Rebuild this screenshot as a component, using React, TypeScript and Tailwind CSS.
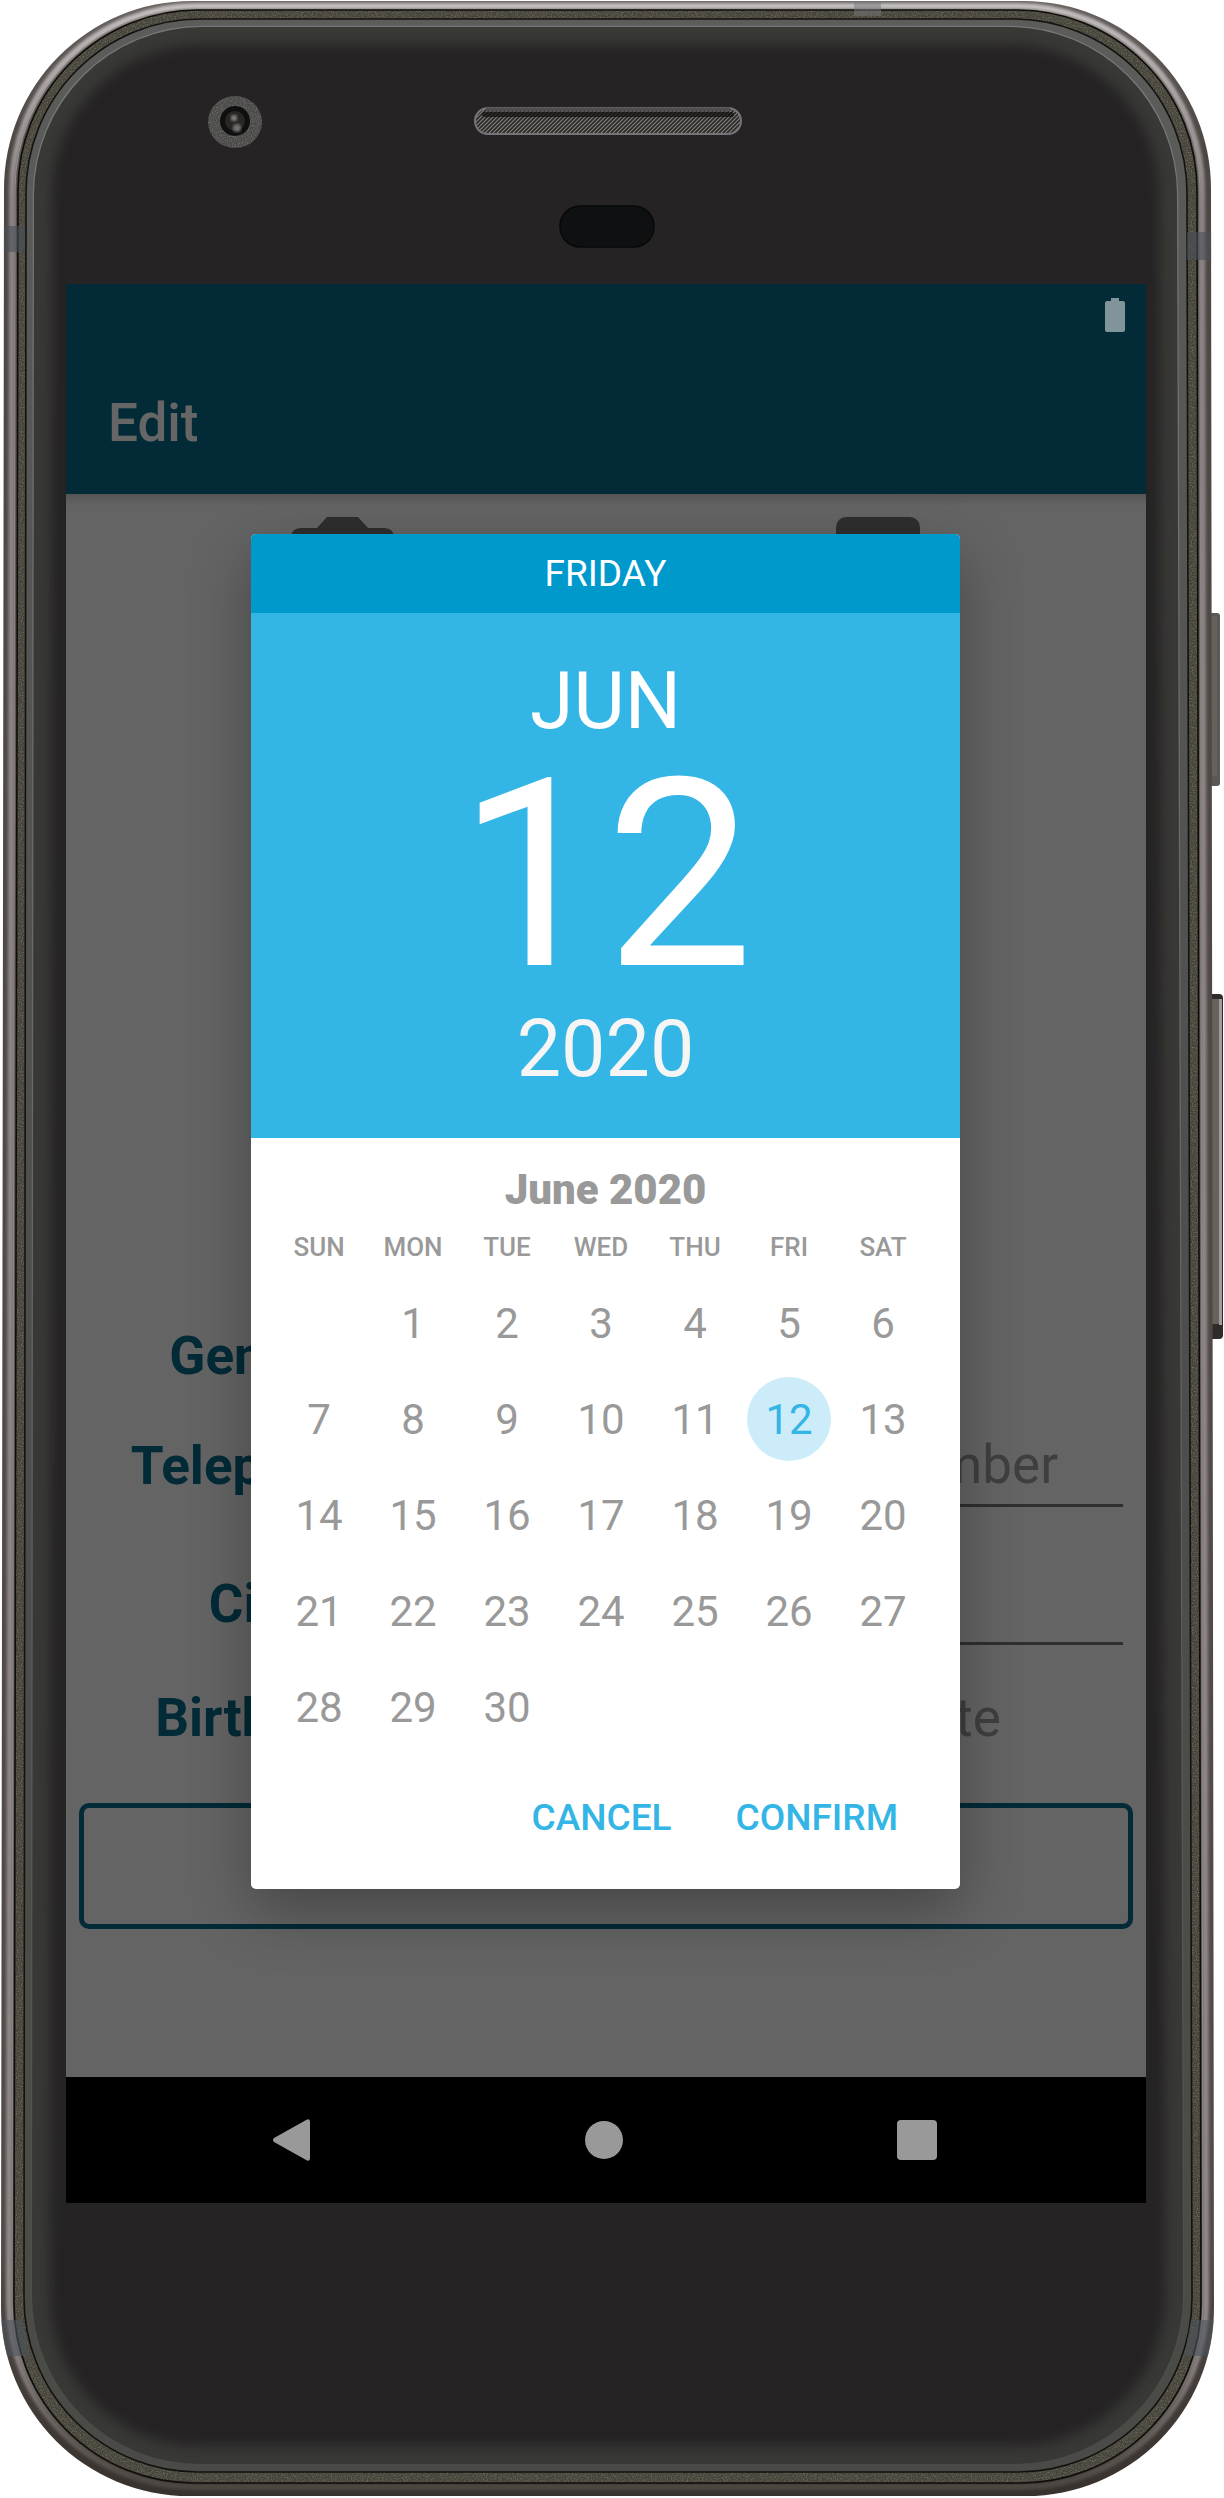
import React from "react";

const weekdays = ["SUN", "MON", "TUE", "WED", "THU", "FRI", "SAT"];
const weeks: (number | null)[][] = [
  [null, 1, 2, 3, 4, 5, 6],
  [7, 8, 9, 10, 11, 12, 13],
  [14, 15, 16, 17, 18, 19, 20],
  [21, 22, 23, 24, 25, 26, 27],
  [28, 29, 30, null, null, null, null],
];

// Rounded body outline whose sides widen slightly towards the bottom.
function body(lt: number, t: number, rt: number, lb: number, b: number, rb: number, r: number) {
  return `M${lt + r} ${t}H${rt - r}A${r} ${r} 0 0 1 ${rt} ${t + r}L${rb} ${b - r}A${r} ${r} 0 0 1 ${rb - r} ${b}H${lb + r}A${r} ${r} 0 0 1 ${lb} ${b - r}L${lt} ${t + r}A${r} ${r} 0 0 1 ${lt + r} ${t}Z`;
}

const outer = body(4, 1, 1211, 1, 2496, 1214, 188);
const band = body(18, 10, 1197, 14, 2483, 1201, 180);
const glassEdge = body(26, 19, 1187, 24, 2472, 1192, 174);
const glass = body(34, 27, 1177, 32, 2464, 1183, 168);

function PhoneHardware() {
  return (
    <svg aria-hidden="true" className="absolute inset-0 h-full w-full" viewBox="0 0 1224 2498" preserveAspectRatio="none">
      <defs>
        <linearGradient id="metal" x1="0" x2="0" y1="0" y2="1">
          <stop offset="0" stopColor="#66605d" />
          <stop offset="0.06" stopColor="#4d4743" />
          <stop offset="0.9" stopColor="#524a47" />
          <stop offset="1" stopColor="#38322e" />
        </linearGradient>
        <linearGradient id="shine" x1="0" x2="0" y1="0" y2="1">
          <stop offset="0" stopColor="#c4bfbf" />
          <stop offset="0.08" stopColor="#8b8585" />
          <stop offset="0.94" stopColor="#918a8a" />
          <stop offset="1" stopColor="#4c4742" />
        </linearGradient>
        <linearGradient id="edge" x1="0" x2="0" y1="0" y2="1">
          <stop offset="0" stopColor="#5c5c5b" />
          <stop offset="0.5" stopColor="#4e4e4d" />
          <stop offset="1" stopColor="#4a4a46" />
        </linearGradient>
        <linearGradient id="rim" x1="0" x2="0" y1="0" y2="1">
          <stop offset="0" stopColor="#77777a" />
          <stop offset="0.5" stopColor="#66666a" />
          <stop offset="1" stopColor="#4a4a46" />
        </linearGradient>
        <pattern id="mesh" width="4" height="4" patternUnits="userSpaceOnUse">
          <rect width="4" height="4" fill="#2b2927" />
          <path d="M-1 3L3 -1M1 5L5 1" stroke="#817f7b" strokeWidth="1.2" />
        </pattern>
        <filter id="grain" x="0" y="0" width="1" height="1" colorInterpolationFilters="sRGB">
          <feTurbulence type="fractalNoise" baseFrequency="0.8" numOctaves="2" />
          <feColorMatrix values="0 0 0 0 0.55  0 0 0 0 0.54  0 0 0 0 0.48  1.4 0 0 0 -0.58" />
          <feComposite in2="SourceGraphic" operator="in" result="n" />
          <feMerge>
            <feMergeNode in="SourceGraphic" />
            <feMergeNode in="n" />
          </feMerge>
        </filter>
        <filter id="soft" x="-0.1" y="-0.1" width="1.2" height="1.2" colorInterpolationFilters="sRGB">
          <feGaussianBlur stdDeviation="6" />
        </filter>
        <filter id="thin" x="-0.1" y="-0.1" width="1.2" height="1.2" colorInterpolationFilters="sRGB">
          <feGaussianBlur stdDeviation="1.6" />
        </filter>
        <clipPath id="glassClip"><path d={glass} /></clipPath>
        <clipPath id="outerClip"><path d={outer} /></clipPath>
      </defs>

      <g>
        <rect x="1208" y="613" width="12" height="173" rx="3" fill="#5b5753" />
        <rect x="1208" y="616" width="9" height="160" fill="#66615d" />
        <rect x="1208" y="994" width="15" height="345" rx="4" fill="#2f2b2a" />
        <rect x="1208" y="999" width="12" height="325" fill="#66635b" />
        <rect x="1219" y="999" width="3" height="326" fill="#a29b9d" />
      </g>

      <path d={outer} fill="url(#metal)" />
      <g clipPath="url(#outerClip)">
        <path d={body(12, 6, 1202, 9, 2487, 1206, 184)} fill="none" stroke="url(#shine)" strokeWidth="6" filter="url(#thin)" />
        <path d={body(15, 6, 1200, 12, 2486, 1203, 183)} fill="none" stroke="url(#shine)" strokeWidth="1" />
      </g>
      <path d={band} fill="#454339" filter="url(#grain)" />
      <path d={band} fill="none" stroke="#0f0d0b" strokeWidth="1.6" />
      <path d={glassEdge} fill="url(#edge)" stroke="#131210" strokeWidth="1.6" />
      <path d={glass} fill="#252324" stroke="url(#rim)" strokeWidth="2.5" />
      <g clipPath="url(#glassClip)">
        <path d={glass} fill="none" stroke="#383835" strokeWidth="36" filter="url(#soft)" />
      </g>

      <g clipPath="url(#outerClip)">
        <path d="M0 226H25V252H0Z M1187 232H1224V260H1187Z" fill="#4a5058" opacity="0.6" />
        <path d="M0 2320H22L30 2356H0Z M1191 2320H1224V2356H1184Z" fill="#4d535b" opacity="0.6" />
        <path d="M854 0H881V16H854Z" fill="#77787a" opacity="0.5" />
      </g>

      <ellipse cx="235" cy="122" rx="27" ry="26" fill="#4a494a" filter="url(#grain)" />
      <circle cx="235" cy="121" r="15" fill="#100f0f" />
      <circle cx="235" cy="121" r="10" fill="#292725" />
      <circle cx="234" cy="118" r="3" fill="#8d8b89" filter="url(#thin)" />
      <circle cx="237" cy="128" r="4" fill="#767472" filter="url(#thin)" />

      <rect x="475" y="108" width="266" height="26" rx="13" fill="url(#mesh)" />
      <rect x="482" y="112" width="252" height="5" rx="2.5" fill="#0f0e0e" opacity="0.7" />
      <rect x="475" y="108" width="266" height="26" rx="13" fill="none" stroke="#757375" strokeWidth="2" />
      <path d="M486 109.500H730" stroke="#4f4d4f" strokeWidth="4" />

      <rect x="560" y="206" width="94" height="41" rx="20" fill="#0f1012" stroke="#090808" strokeWidth="1.5" />
    </svg>
  );
}

function Field({ id, label, placeholder, underline }: { id: string; label: string; placeholder: string; underline: boolean }) {
  return (
    <>
      <label htmlFor={id} className="pt-1 text-center font-bold text-[#05698a]">{label}</label>
      <input
        id={id}
        placeholder={placeholder}
        className={
          underline
            ? "mr-[23px] h-[86px] min-w-0 border-b-3 border-[#767676] bg-transparent pt-1 text-center placeholder:text-[#9e9e9e]"
            : "mr-[23px] h-[86px] min-w-0 bg-transparent pt-1 text-center placeholder:text-[#9e9e9e]"
        }
      />
    </>
  );
}

const rowGrid = "grid grid-cols-[394px_minmax(0,1fr)] items-center text-[53px] leading-[62px]";

function EditForm() {
  return (
    <main className="bg-[#fafafa] px-[13px] pb-[148px]">
      <div className="-mx-[13px] h-3 bg-linear-to-b from-black/15 to-transparent" />
      <div className="-mx-[13px] grid min-h-[805px] grid-cols-2 items-start pt-[11px] pl-2">
        <button aria-label="Take photo" className="flex justify-center text-[#737373]">
          <svg width="103" height="93" viewBox="0 0 103 93" fill="currentColor">
            <path d="M36 0H67L77 11H93Q103 11 103 21V83Q103 93 93 93H10Q0 93 0 83V21Q0 11 10 11H26Z" />
          </svg>
        </button>
        <button aria-label="Choose picture" className="flex justify-center text-[#737373]">
          <svg width="84" height="84" viewBox="0 0 84 84" fill="currentColor">
            <rect width="84" height="84" rx="10" />
          </svg>
        </button>
      </div>
      <div className="-mx-[13px]">
        <div className={`${rowGrid} h-[84px]`}>
          <Field id="gender" label="Gender:" placeholder="" underline={false} />
        </div>
        <div className={`${rowGrid} h-[138px]`}>
          <Field id="telephone" label="Telephone:" placeholder="Change phone number" underline />
        </div>
        <div className={`${rowGrid} h-[138px]`}>
          <Field id="city" label="City:" placeholder="Enter city" underline />
        </div>
        <div className={`${rowGrid} h-[90px]`}>
          <Field id="birthday" label="Birthday:" placeholder="Change birth date" underline={false} />
        </div>
      </div>
      <button aria-label="Save" className="mt-[42px] block h-[126px] w-full rounded-[10px] border-5 border-[#05698a]" />
    </main>
  );
}

function DatePicker() {
  return (
    <section role="dialog" aria-label="Choose date" className="mr-px mb-px w-[709px] overflow-hidden rounded-[5px] bg-white shadow-[0_22px_60px_rgba(0,0,0,0.3)]">
      <header className="text-center text-white">
        <div className="flex h-[79px] items-center justify-center bg-[#0099cc] text-[37px]">FRIDAY</div>
        <div className="bg-[#33b5e5] pt-[42px] pb-[43px]">
          <div className="text-[79px] leading-[92px]">JUN</div>
          <div className="my-2 text-[263px] leading-[240px]">12</div>
          <div className="text-[79px] leading-[92px] text-[#f5f5f5]">2020</div>
        </div>
      </header>
      <div className="pt-[27px] pr-[30px] pb-[23px] pl-[21px] text-[#999999]">
        <h2 className="-mr-[9px] text-center text-[42px] leading-[49px] font-black">June 2020</h2>
        <table className="mt-[18px] w-full table-fixed">
          <thead>
            <tr>
              {weekdays.map((d) => (
                <th key={d} scope="col" className="pb-[13px] text-[26px] leading-[30px] font-medium">{d}</th>
              ))}
            </tr>
          </thead>
          <tbody>
            {weeks.map((week, i) => (
              <tr key={i} className="h-24">
                {week.map((day, j) => (
                  <td key={j} className="p-0 align-middle">
                    {day !== null && (
                      <button
                        className={
                          day === 12
                            ? "mx-auto flex size-[84px] items-center justify-center rounded-full bg-[#cdecf9] text-[42px] text-[#33b5e5]"
                            : "mx-auto flex size-[84px] items-center justify-center rounded-full text-[42px]"
                        }
                      >
                        {day}
                      </button>
                    )}
                  </td>
                ))}
              </tr>
            ))}
          </tbody>
        </table>
        <div className="mt-[15px] flex justify-end gap-6 pr-3 text-[37px] font-medium text-[#33b5e5]">
          <button className="h-24 px-5">CANCEL</button>
          <button className="h-24 px-5">CONFIRM</button>
        </div>
      </div>
    </section>
  );
}

export default function App() {
  return (
    <div className="relative min-h-screen bg-white pt-[284px] pr-[78px] pb-[294px] pl-[66px] font-[Roboto,sans-serif]">
      <PhoneHardware />
      <div className="relative flex flex-col">
        <div className="flex h-[63px] items-start justify-end bg-[#022a37] pt-[14px] pr-[21px]">
          <svg width="20" height="34" viewBox="0 0 20 34" fill="#819499" role="img" aria-label="Battery full">
            <path d="M6 0H14V3H18Q20 3 20 5V32Q20 34 18 34H2Q0 34 0 32V5Q0 3 2 3H6Z" />
          </svg>
        </div>
        <div className="relative">
          <header className="flex h-[147px] items-center bg-[#05698a] pt-1 pl-[42px]">
            <h1 className="text-[53px] leading-[62px] font-medium text-white">Edit</h1>
          </header>
          <EditForm />
          <div className="absolute inset-0 flex items-center justify-center bg-black/60">
            <DatePicker />
          </div>
        </div>
        <nav className="flex h-[126px] items-center justify-between bg-black pr-[209px] pl-[207px] text-[#999999]">
          <button aria-label="Back">
            <svg width="37" height="42" viewBox="0 0 37 42" fill="currentColor">
              <path d="M1 19L34 0.500Q37 -0.500 37 3V39Q37 42.500 34 41.500L1 23Q-1 21 1 19Z" />
            </svg>
          </button>
          <button aria-label="Home">
            <svg width="38" height="38" viewBox="0 0 38 38" fill="currentColor"><circle cx="19" cy="19" r="19" /></svg>
          </button>
          <button aria-label="Recent apps">
            <svg width="40" height="40" viewBox="0 0 40 40" fill="currentColor"><rect width="40" height="40" rx="4" /></svg>
          </button>
        </nav>
      </div>
    </div>
  );
}
